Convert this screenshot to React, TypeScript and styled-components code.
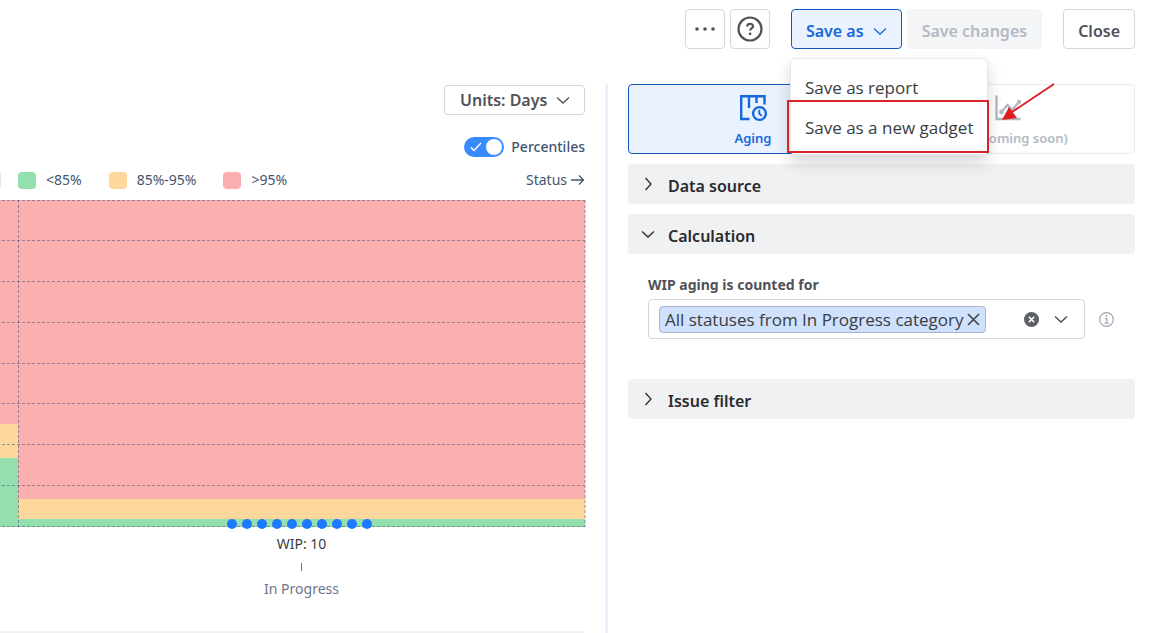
import React from "react";
import styled, { createGlobalStyle, css } from "styled-components";

const GlobalStyle = createGlobalStyle`
  *, *::before, *::after { box-sizing: border-box; }
  html, body { margin: 0; height: 100%; }
  #root { height: 100%; }
  body {
    background: #fff;
    color: #292a2e;
    font-family: "Noto Sans", "Open Sans", sans-serif;
    font-size: 16px;
    line-height: 24px;
    overflow: hidden;
  }
  button, input, select { font: inherit; color: inherit; margin: 0; }
  svg { display: block; flex: none; }
`;

const regularText = css`
  font-family: "Open Sans", "Noto Sans", sans-serif;
  font-size: 17px;
`;

const Page = styled.div`
  display: flex;
  flex-direction: column;
  min-height: 100%;
`;

const Toolbar = styled.header`
  display: flex;
  justify-content: flex-end;
  gap: 21px;
  padding: 9px 28px 35px 0;
`;

const ButtonGroup = styled.div`
  display: flex;
  gap: 5px;
`;

const Button = styled.button<{ $variant?: "icon" | "active" | "muted" }>`
  display: flex;
  align-items: center;
  justify-content: center;
  gap: 9px;
  height: 40px;
  padding: 3px 14px 0;
  border: 1px solid #d5d7db;
  border-radius: 4px;
  background: #fff;
  color: #505258;
  font-weight: 600;
  white-space: nowrap;
  ${(p) => p.$variant === "icon" && css`
    width: 40px;
    padding: 0;
  `}
  ${(p) => p.$variant === "active" && css`
    border-color: #1558bc;
    background: #e9f2fe;
    color: #1868db;
  `}
  ${(p) => p.$variant === "muted" && css`
    border-color: #f4f5f6;
    background: #f4f5f6;
    color: #b3b9c4;
  `}
`;

const MenuAnchor = styled.div`
  position: relative;
`;

const Menu = styled.div`
  position: absolute;
  z-index: 2;
  top: 49px;
  left: -1px;
  padding: 9px 0 6px;
  border: 1px solid #e6e7ea;
  border-radius: 5px;
  background: #fff;
  box-shadow: 0 8px 16px rgba(30, 31, 33, 0.18);
`;

const MenuItem = styled.button`
  display: block;
  width: 100%;
  height: 40px;
  padding: 0 14px;
  border: 0;
  background: none;
  color: #3b3d42;
  ${regularText}
  text-align: left;
  white-space: nowrap;
`;

const Highlight = styled.div`
  position: absolute;
  inset: 41px -2px 1px -4px;
  border: 2px solid #d9252a;
  pointer-events: none;
`;

const Pointer = styled.svg`
  position: absolute;
  top: 23px;
  right: -71px;
  pointer-events: none;
`;

const Main = styled.main`
  flex: 1;
  display: grid;
  grid-template-columns: minmax(0, 15fr) 3px minmax(0, 13fr);
  column-gap: 20px;
  padding-right: 28px;
`;

const Divider = styled.div`
  background: #e9f2fe;
`;

const ChartPane = styled.section`
  display: flex;
  flex-direction: column;
  padding-top: 1px;
`;

const ControlRow = styled.div`
  display: flex;
  justify-content: flex-end;
`;

const UnitSelect = styled.label`
  position: relative;
  width: 141px;
  color: #505258;

  select {
    width: 100%;
    height: 30px;
    padding: 0 10px 0 15px;
    border: 1px solid #d5d7db;
    border-radius: 4px;
    appearance: none;
    background: #fff;
    font-weight: 600;
  }
  svg {
    position: absolute;
    top: 8px;
    right: 15px;
    pointer-events: none;
  }
`;

const SwitchLabel = styled.label`
  display: flex;
  align-items: center;
  gap: 7px;
  height: 20px;
  margin-top: 22px;
  color: #44546f;
  font-size: 14px;
  font-weight: 500;
`;

const SwitchTrack = styled.span`
  position: relative;
  display: flex;
  align-items: center;
  width: 40px;
  height: 20px;
  padding-left: 6px;
  border-radius: 10px;
  background: #388bff;

  input {
    position: absolute;
    inset: 0;
    width: 100%;
    height: 100%;
    opacity: 0;
  }
  &::after {
    content: "";
    position: absolute;
    top: 2px;
    right: 2px;
    width: 16px;
    height: 16px;
    border-radius: 50%;
    background: #fff;
  }
`;

const LegendRow = styled.div`
  display: flex;
  align-items: center;
  height: 20px;
  margin: 13px 0 10px;
  color: #44546f;
  font-size: 14px;
`;

const LegendList = styled.ul`
  display: flex;
  gap: 27px;
  flex: 1;
  margin: 0;
  padding: 0 0 0 18px;
  list-style: none;
  background: linear-gradient(#e4e6ea, #e4e6ea) left center / 1px 14px no-repeat;
`;

const LegendItem = styled.li<{ $color: string }>`
  display: flex;
  align-items: center;
  gap: 10px;

  &::before {
    content: "";
    width: 18px;
    height: 17px;
    border-radius: 4px;
    background: ${(p) => p.$color};
  }
`;

const SortLink = styled.a`
  display: flex;
  align-items: center;
  gap: 4px;
  color: inherit;
  text-decoration: none;
`;

const AxisLabels = styled.div`
  display: flex;
  flex-direction: column;
  align-items: center;
  padding: 5px 0 0 18px;
  color: #6b778c;
  font-size: 14px;
  line-height: 24px;
`;

const WipCount = styled.div`
  color: #3b3d42;
`;

const Tick = styled.div`
  width: 1px;
  height: 8px;
  margin: 7px 0 6px;
  background: #6b6e76;
`;

const PaneEdge = styled.div`
  height: 2px;
  margin: 30px 1px 0 0;
  border-radius: 0 2px 0 0;
  background: #f0f1f2;
`;

const Settings = styled.aside`
  display: flex;
  flex-direction: column;
  gap: 10px;
`;

const Tabs = styled.div`
  display: grid;
  grid-template-columns: 1fr 1fr;
  gap: 3px;
  height: 70px;
`;

const Tab = styled.button<{ $active?: boolean }>`
  display: flex;
  flex-direction: column;
  align-items: center;
  justify-content: center;
  gap: 6px;
  padding: 4px 2px 0 0;
  border: 1px solid ${(p) => (p.$active ? "#1558bc" : "#ebecee")};
  border-radius: 4px;
  background: ${(p) => (p.$active ? "#e9f2fe" : "#fff")};
  color: ${(p) => (p.$active ? "#1868db" : "#b3b9c4")};
  font-size: 13px;
  font-weight: 600;
  line-height: 20px;
`;

const SectionHeader = styled.button`
  display: flex;
  align-items: center;
  gap: 13px;
  width: 100%;
  height: 40px;
  padding: 3px 13px 0;
  border: 0;
  border-radius: 4px;
  background: #f0f1f2;
  font-weight: 600;
  text-align: left;

  svg {
    margin-bottom: 3px;
  }
`;

const SectionBody = styled.div`
  padding: 21px 20px 30px;
`;

const FieldLabel = styled.label`
  display: block;
  margin-bottom: 4px;
  color: #505258;
  font-size: 14px;
  font-weight: 700;
  line-height: 20px;
`;

const FieldRow = styled.div`
  display: flex;
  align-items: center;
  gap: 14px;
  padding-right: 1px;
`;

const MultiSelect = styled.div`
  display: flex;
  align-items: center;
  flex: 1;
  height: 40px;
  padding: 0 16px 0 10px;
  border: 1px solid #d5d7db;
  border-radius: 4px;
  color: #44474d;

  input {
    flex: 1;
    min-width: 0;
    width: 10px;
    padding: 0;
    border: 0;
    outline: 0;
    background: none;
  }
`;

const Tag = styled.span`
  display: flex;
  align-items: center;
  gap: 3px;
  height: 27px;
  padding: 0 5px;
  border: 1px solid #a9b5cb;
  border-radius: 4px;
  background: #cfe1fd;
  color: #3b3d42;
  ${regularText}
  white-space: nowrap;
`;

const TagText = styled.span`
  padding-top: 2px;
`;

const GlyphButton = styled.button<{ $gap?: number }>`
  display: flex;
  margin-right: ${(p) => p.$gap ?? 0}px;
  padding: 0;
  border: 0;
  background: none;
`;

const Chevron = ({ open = true }: { open?: boolean }) => (
  <svg width="14" height="14" viewBox="0 0 14 14" fill="none" stroke="currentColor" strokeWidth="1.3">
    <path d={open ? "M1 4.500l6 5.500 6-5.500" : "M4.500 1l5.500 6-5.500 6"} />
  </svg>
);

const PLOT_HEIGHT = 327;
const GRID_ROWS = [0, 40, 81, 122, 163, 203, 244, 285, 326];
const COLORS = { low: "#94dfae", mid: "#fed79c", high: "#fbb0b0" };
const ISSUES = Array.from({ length: 10 }, (_, i) => i);

const AgingChart = () => (
  <svg width="100%" height={PLOT_HEIGHT} overflow="visible" role="img" aria-label="Aging by status">
    <rect width="100%" height={PLOT_HEIGHT} fill={COLORS.high} />
    <rect y="224" width="18" height="35" fill={COLORS.mid} />
    <rect y="258" width="18" height="69" fill={COLORS.low} />
    <svg x="18" width="100%" height={PLOT_HEIGHT} style={{ clipPath: "inset(0 18px 0 0)" }}>
      <rect y="299" width="100%" height="21" fill={COLORS.mid} />
      <rect y="319" width="100%" height="8" fill={COLORS.low} />
    </svg>
    <g stroke="#5b6480" strokeOpacity="0.65" strokeDasharray="3 2">
      {GRID_ROWS.map((y) => (
        <line key={y} x1="2" x2="100%" y1={y + 0.5} y2={y + 0.5} />
      ))}
      <line x1="18.5" x2="18.5" y1="0" y2={PLOT_HEIGHT} />
      <line x1="100%" x2="100%" y1="0" y2={PLOT_HEIGHT} />
    </g>
    <svg x="50%" overflow="visible">
      {ISSUES.map((i) => (
        <circle key={i} cx={-60.5 + i * 15} cy="324" r="5" fill="#1d7afc" />
      ))}
    </svg>
  </svg>
);

export default function App() {
  return (
    <Page>
      <GlobalStyle />
      <Toolbar>
        <ButtonGroup>
          <Button $variant="icon" aria-label="More actions">
            <svg width="22" height="6" viewBox="0 0 22 6" fill="currentColor">
              <circle cx="3" cy="3" r="1.800" /><circle cx="11" cy="3" r="1.800" /><circle cx="19" cy="3" r="1.800" />
            </svg>
          </Button>
          <Button $variant="icon" aria-label="Help">
            <svg width="26" height="26" viewBox="0 0 26 26" fill="none" stroke="currentColor" strokeWidth="2.200">
              <circle cx="13" cy="13" r="11.500" />
              <path d="M10.200 10.500c0-3.600 5.800-3.600 5.800-.3 0 2.300-2.900 2.200-2.900 4.400" strokeWidth="2.200" />
              <circle cx="13.100" cy="17.800" r="1.400" fill="currentColor" stroke="none" />
            </svg>
          </Button>
        </ButtonGroup>
        <ButtonGroup>
          <MenuAnchor>
            <Button $variant="active" aria-haspopup="menu" aria-expanded>
              Save as
              <Chevron />
            </Button>
            <Menu role="menu">
              <MenuItem role="menuitem">Save as report</MenuItem>
              <MenuItem role="menuitem">Save as a new gadget</MenuItem>
              <Highlight />
              <Pointer width="58" height="42" viewBox="0 0 58 42">
                <path d="M54 2L12 30" stroke="#d9252a" strokeWidth="2" />
                <path d="M2 38L9 25L17 36Z" fill="#e01e22" />
              </Pointer>
            </Menu>
          </MenuAnchor>
          <Button $variant="muted" disabled>Save changes</Button>
        </ButtonGroup>
        <Button>Close</Button>
      </Toolbar>

      <Main>
        <ChartPane>
          <ControlRow>
            <UnitSelect>
              <select aria-label="Units" defaultValue="days">
                <option value="days">Units: Days</option>
              </select>
              <Chevron />
            </UnitSelect>
          </ControlRow>
          <ControlRow>
            <SwitchLabel>
              <SwitchTrack>
                <input type="checkbox" role="switch" defaultChecked />
                <svg width="12" height="10" viewBox="0 0 12 10" fill="none" stroke="#fff" strokeWidth="1.500">
                  <path d="M1 5.500l3 3L11 1" />
                </svg>
              </SwitchTrack>
              Percentiles
            </SwitchLabel>
          </ControlRow>
          <LegendRow>
            <LegendList>
              <LegendItem $color={COLORS.low}>&lt;85%</LegendItem>
              <LegendItem $color={COLORS.mid}>85%-95%</LegendItem>
              <LegendItem $color={COLORS.high}>&gt;95%</LegendItem>
            </LegendList>
            <SortLink href="#status">
              Status
              <svg width="14" height="12" viewBox="0 0 14 12" fill="none" stroke="currentColor" strokeWidth="1.300">
                <path d="M0 6h12.500M8 1.500L12.500 6 8 10.500" />
              </svg>
            </SortLink>
          </LegendRow>
          <AgingChart />
          <AxisLabels>
            <WipCount>WIP: 10</WipCount>
            <Tick />
            <div>In Progress</div>
          </AxisLabels>
          <PaneEdge />
        </ChartPane>

        <Divider />

        <Settings>
          <Tabs role="tablist">
            <Tab $active role="tab" aria-selected>
              <svg width="28" height="28" viewBox="0 0 28 28" fill="none" stroke="currentColor" strokeWidth="2.400">
                <path d="M10.500 25H2.200V2.200H25.500V10.500M10 2.200V14M17.500 2.200V9" />
                <circle cx="20.500" cy="19.500" r="6.400" />
                <path d="M20.300 15.800v4l2.500 2" strokeWidth="1.900" />
              </svg>
              Aging
            </Tab>
            <Tab role="tab" aria-selected={false}>
              <svg width="28" height="28" viewBox="0 0 28 28" fill="none" stroke="currentColor" strokeWidth="2.400">
                <path d="M2.500 1.500V25H26.500M7.500 18l6-7 4.500 5 7-8" />
                <circle cx="7.500" cy="18" r="1.200" fill="currentColor" />
                <circle cx="25" cy="8" r="1" fill="currentColor" />
              </svg>
              CFD (Coming soon)
            </Tab>
          </Tabs>
          <SectionHeader aria-expanded={false}>
            <Chevron open={false} />
            Data source
          </SectionHeader>
          <div>
            <SectionHeader aria-expanded>
              <Chevron />
              Calculation
            </SectionHeader>
            <SectionBody>
              <FieldLabel htmlFor="statuses">WIP aging is counted for</FieldLabel>
              <FieldRow>
                <MultiSelect>
                  <Tag>
                    <TagText>All statuses from In Progress category</TagText>
                    <GlyphButton aria-label="Remove status">
                      <svg width="13" height="13" viewBox="0 0 13 13" stroke="currentColor" strokeWidth="1.500">
                        <path d="M1 1l11 11M12 1L1 12" />
                      </svg>
                    </GlyphButton>
                  </Tag>
                  <input id="statuses" type="text" />
                  <GlyphButton $gap={15} aria-label="Clear all">
                    <svg width="15" height="15" viewBox="0 0 15 15">
                      <circle cx="7.500" cy="7.500" r="7.500" fill="#5c5f66" />
                      <path d="M4.800 4.800l5.400 5.400M10.200 4.800l-5.400 5.400" stroke="#fff" strokeWidth="1.600" />
                    </svg>
                  </GlyphButton>
                  <GlyphButton aria-label="Show options">
                    <Chevron />
                  </GlyphButton>
                </MultiSelect>
                <svg width="15" height="15" viewBox="0 0 15 15" fill="none" stroke="#a0a4ae" strokeWidth="1.200">
                  <circle cx="7.500" cy="7.500" r="6.800" />
                  <path d="M6 6.500h1.800V11M5.500 11.200h4.300" />
                  <circle cx="7.500" cy="4" r=".9" fill="#a0a4ae" stroke="none" />
                </svg>
              </FieldRow>
            </SectionBody>
          </div>
          <SectionHeader aria-expanded={false}>
            <Chevron open={false} />
            Issue filter
          </SectionHeader>
        </Settings>
      </Main>
    </Page>
  );
}
